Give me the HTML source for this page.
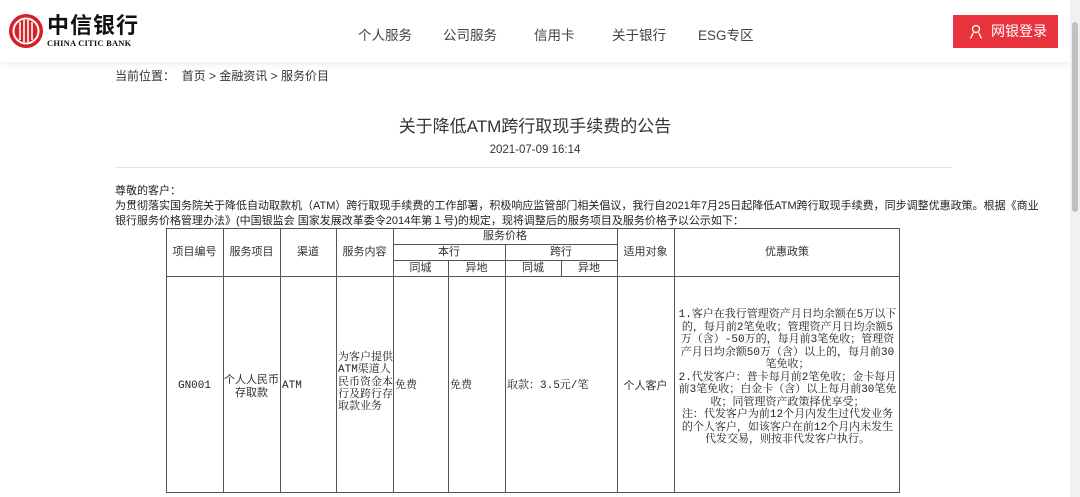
<!DOCTYPE html>
<html><head><meta charset="utf-8">
<style>
*{margin:0;padding:0;box-sizing:border-box}
body{width:1080px;height:497px;overflow:hidden;background:#fff;font-family:"Liberation Sans","Noto Sans CJK SC",sans-serif;color:#333;position:relative}
.hdr{position:absolute;left:0;top:0;width:1070px;height:62px;background:#fff;box-shadow:0 2px 6px rgba(0,0,0,.08)}
.nav{position:absolute;top:24px;font-size:13.5px;color:#444}
.btn{position:absolute;left:953px;top:15px;width:105px;height:33px;background:#e8333f;color:#fff;font-size:14px;line-height:33px;padding-left:38px}
.sb{position:absolute;right:0;top:0;width:10px;height:497px;background:#f1f1f1}
.sb div{position:absolute;left:2px;top:22px;width:6px;height:190px;background:#c1c1c1;border-radius:3px}
.abs{position:absolute;white-space:nowrap}
.t{position:absolute;border-color:#555;border-style:solid;border-width:0}
.c{position:absolute;font-size:11px;color:#222;text-align:center;font-family:"Liberation Mono","Noto Serif CJK SC",serif;line-height:12.5px}
.h{font-family:"Liberation Sans","Noto Sans CJK SC",sans-serif;font-size:11px;color:#333}
</style></head><body>
<div class="hdr">
 <svg style="position:absolute;left:8px;top:13px" width="36" height="36" viewBox="0 0 36 36">
  <circle cx="18" cy="18" r="17" fill="#d71f26"/>
  <circle cx="18" cy="18" r="12.5" fill="none" stroke="#fff" stroke-width="2"/>
  <path d="M12 9v18M16 7v22M20 7v22M24 9v18" stroke="#fff" stroke-width="1.6"/>
 </svg>
 <div class="abs" style="left:47px;top:11px;font-size:22px;font-weight:bold;color:#111;letter-spacing:1px;font-family:'Noto Sans CJK SC',sans-serif;line-height:26px">中信银行</div>
 <div class="abs" style="left:47px;top:38px;font-size:8.5px;color:#111;font-family:'Liberation Serif',serif;font-weight:bold;letter-spacing:.2px">CHINA CITIC BANK</div>
 <div class="nav" style="left:358px">个人服务</div>
 <div class="nav" style="left:443px">公司服务</div>
 <div class="nav" style="left:534px">信用卡</div>
 <div class="nav" style="left:612px">关于银行</div>
 <div class="nav" style="left:698px">ESG专区</div>
 <div class="btn"><svg style="position:absolute;left:16px;top:9px" width="14" height="15" viewBox="0 0 14 15"><circle cx="7" cy="5" r="3.5" fill="none" stroke="#fff" stroke-width="1.3"/><path d="M1.5 14.5L4.5 8.5M12.5 14.5L9.5 8.5" stroke="#fff" stroke-width="1.3" fill="none"/></svg>网银登录</div>
</div>
<div class="sb"><div></div></div>
<div class="abs" style="left:115px;top:67px;font-size:12px;color:#333">当前位置：&nbsp; 首页 &gt; 金融资讯 &gt; 服务价目</div>
<div class="abs" style="left:0;width:1070px;text-align:center;top:112px;font-size:17px;color:#333">关于降低ATM跨行取现手续费的公告</div>
<div class="abs" style="left:0;width:1070px;text-align:center;top:144px;font-size:11.5px;color:#333">2021-07-09 16:14</div>
<div class="abs" style="left:115px;top:167px;width:837px;height:1px;background:#e5e5e5"></div>
<div class="abs" style="left:115px;top:184px;font-size:11px;color:#222;line-height:14.8px">尊敬的客户：<br>为贯彻落实国务院关于降低自动取款机（ATM）跨行取现手续费的工作部署，积极响应监管部门相关倡议，我行自2021年7月25日起降低ATM跨行取现手续费，同步调整优惠政策。根据《商业<br>银行服务价格管理办法》(中国银监会 国家发展改革委令2014年第１号)的规定，现将调整后的服务项目及服务价格予以公示如下：</div>

<div class="t" style="left:166px;top:228px;width:734px;height:265px;border-width:1px"></div>
<div class="t" style="left:166px;top:276px;width:734px;height:0;border-top-width:1px"></div>
<div class="t" style="left:393px;top:244px;width:224px;height:0;border-top-width:1px"></div>
<div class="t" style="left:393px;top:260px;width:224px;height:0;border-top-width:1px"></div>
<div class="t" style="left:223px;top:228px;height:265px;border-left-width:1px"></div>
<div class="t" style="left:280px;top:228px;height:265px;border-left-width:1px"></div>
<div class="t" style="left:336px;top:228px;height:265px;border-left-width:1px"></div>
<div class="t" style="left:393px;top:228px;height:265px;border-left-width:1px"></div>
<div class="t" style="left:448px;top:260px;height:233px;border-left-width:1px"></div>
<div class="t" style="left:505px;top:244px;height:249px;border-left-width:1px"></div>
<div class="t" style="left:561px;top:260px;height:16px;border-left-width:1px"></div>
<div class="t" style="left:617px;top:228px;height:265px;border-left-width:1px"></div>
<div class="t" style="left:674px;top:228px;height:265px;border-left-width:1px"></div>

<div class="c h" style="left:166px;width:57px;top:246px">项目编号</div>
<div class="c h" style="left:223px;width:57px;top:246px">服务项目</div>
<div class="c h" style="left:280px;width:56px;top:246px">渠道</div>
<div class="c h" style="left:336px;width:57px;top:246px">服务内容</div>
<div class="c h" style="left:393px;width:224px;top:230px">服务价格</div>
<div class="c h" style="left:393px;width:112px;top:246px">本行</div>
<div class="c h" style="left:505px;width:112px;top:246px">跨行</div>
<div class="c h" style="left:393px;width:55px;top:262px">同城</div>
<div class="c h" style="left:448px;width:57px;top:262px">异地</div>
<div class="c h" style="left:505px;width:56px;top:262px">同城</div>
<div class="c h" style="left:561px;width:56px;top:262px">异地</div>
<div class="c h" style="left:617px;width:57px;top:246px">适用对象</div>
<div class="c h" style="left:674px;width:226px;top:246px">优惠政策</div>

<div class="c" style="left:166px;width:57px;top:380px">GN001</div>
<div class="c h" style="left:223px;width:57px;top:374px">个人人民币<br>存取款</div>
<div class="c" style="left:282px;top:380px;text-align:left">ATM</div>
<div class="c" style="left:338px;width:56px;top:352px;text-align:left;line-height:12.3px">为客户提供<br>ATM渠道人<br>民币资金本<br>行及跨行存<br>取款业务</div>
<div class="c" style="left:395px;top:380px;text-align:left">免费</div>
<div class="c" style="left:450px;top:380px;text-align:left">免费</div>
<div class="c" style="left:507px;top:380px;text-align:left">取款：3.5元/笔</div>
<div class="c h" style="left:617px;width:57px;top:380px">个人客户</div>
<div class="c" style="left:677px;width:221px;top:309px">1.客户在我行管理资产月日均余额在5万以下的，每月前2笔免收；管理资产月日均余额5万（含）-50万的，每月前3笔免收；管理资产月日均余额50万（含）以上的，每月前30笔免收；<br>2.代发客户：普卡每月前2笔免收；金卡每月前3笔免收；白金卡（含）以上每月前30笔免收；同管理资产政策择优享受；<br>注：代发客户为前12个月内发生过代发业务的个人客户，如该客户在前12个月内未发生代发交易，则按非代发客户执行。</div>
</body></html>
